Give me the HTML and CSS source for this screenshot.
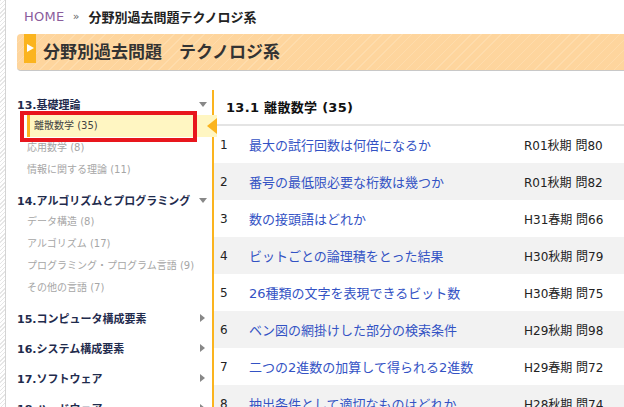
FILE: index.html
```
<!DOCTYPE html>
<html lang="ja">
<head>
    <meta charset="UTF-8">
    <title>分野別過去問題 テクノロジ系</title>
    <link rel="stylesheet" href="styles.css">
</head>
<body>
    <div class="page">
        <div class="breadcrumb">
            <a href="#" class="home">HOME</a>
            <span class="sep">»</span>
            <span class="current">分野別過去問題テクノロジ系</span>
        </div>
        <div class="title-band">
            <span class="marker"></span>
            <h1>分野別過去問題　テクノロジ系</h1>
        </div>
        <div class="columns">
            <div class="sidebar">
                <div class="cat">
                    <div class="cat-title">13.基礎理論<span class="arrow-down"></span></div>
                    <div class="sub active">離散数学 (35)<span class="pointer"></span><span class="mark"></span></div>
                    <div class="sub">応用数学 (8)</div>
                    <div class="sub">情報に関する理論 (11)</div>
                </div>
                <div class="cat">
                    <div class="cat-title">14.アルゴリズムとプログラミング<span class="arrow-down"></span></div>
                    <div class="sub">データ構造 (8)</div>
                    <div class="sub">アルゴリズム (17)</div>
                    <div class="sub">プログラミング・プログラム言語 (9)</div>
                    <div class="sub">その他の言語 (7)</div>
                </div>
                <div class="cat">
                    <div class="cat-title">15.コンピュータ構成要素<span class="arrow-right"></span></div>
                </div>
                <div class="cat">
                    <div class="cat-title">16.システム構成要素<span class="arrow-right"></span></div>
                </div>
                <div class="cat">
                    <div class="cat-title">17.ソフトウェア<span class="arrow-right"></span></div>
                </div>
                <div class="cat">
                    <div class="cat-title">18.ハードウェア<span class="arrow-right"></span></div>
                </div>
            </div>
            <div class="main">
                <h2>13.1 離散数学 (35)</h2>
                <ul class="qlist">
                    <li><span class="num">1</span><a href="#">最大の試行回数は何倍になるか</a><span class="exam">R01秋期 問80</span></li>
                    <li><span class="num">2</span><a href="#">番号の最低限必要な桁数は幾つか</a><span class="exam">R01秋期 問82</span></li>
                    <li><span class="num">3</span><a href="#">数の接頭語はどれか</a><span class="exam">H31春期 問66</span></li>
                    <li><span class="num">4</span><a href="#">ビットごとの論理積をとった結果</a><span class="exam">H30秋期 問79</span></li>
                    <li><span class="num">5</span><a href="#">26種類の文字を表現できるビット数</a><span class="exam">H30春期 問75</span></li>
                    <li><span class="num">6</span><a href="#">ベン図の網掛けした部分の検索条件</a><span class="exam">H29秋期 問98</span></li>
                    <li><span class="num">7</span><a href="#">二つの2進数の加算して得られる2進数</a><span class="exam">H29春期 問72</span></li>
                    <li><span class="num">8</span><a href="#">抽出条件として適切なものはどれか</a><span class="exam">H28秋期 問74</span></li>
                </ul>
            </div>
        </div>
    </div>
</body>
</html>
```
FILE: styles.css
```
body {
    margin: 0;
    font-family: 'DejaVu Sans', 'Noto Sans CJK JP', sans-serif;
    color: #222;
    background: #fff;
    overflow: hidden;
}
.page {
    height: 407px;
    padding-left: 17px;
    background:
        linear-gradient(#d4d4d4, #d4d4d4) 5px 0 / 1px 100% no-repeat,
        repeating-linear-gradient(135deg, #e6e6e6 0 1px, #fff 1px 3px) 0 0 / 5px 100% no-repeat;
}
.breadcrumb {
    height: 34px;
    display: flex;
    align-items: center;
    padding-left: 7px;
    font-size: 13px;
    padding-bottom: 2px;
    box-sizing: border-box;
}
.home {
    color: #8a5c9c;
    text-decoration: none;
    letter-spacing: 0.3px;
}
.sep {
    color: #666;
    font-size: 11px;
    margin: 0 9px 0 8px;
}
.current {
    font-weight: bold;
    color: #222;
}
.title-band {
    height: 36px;
    display: flex;
    align-items: flex-start;
    border-radius: 4px 0 0 4px;
    border-bottom: 1px solid #c8c8c8;
    background:
        repeating-linear-gradient(135deg, #fed59d 0 6px, #fedcac 6px 7px);
}
.marker {
    width: 12px;
    height: 29px;
    margin-left: 7px;
    background: #fbb41e;
    position: relative;
}
.marker::after {
    content: '';
    position: absolute;
    left: 3px;
    top: 10px;
    border-left: 7px solid #fff;
    border-top: 4px solid transparent;
    border-bottom: 4px solid transparent;
}
.title-band h1 {
    margin: 0 0 0 7px;
    line-height: 36px;
    font-size: 17px;
    color: #333;
}
.columns {
    display: flex;
    margin-top: 20px;
}
.sidebar {
    width: 195px;
    padding-top: 2px;
}
.cat {
    padding-bottom: 8px;
}
.cat-title {
    height: 22px;
    display: flex;
    align-items: center;
    justify-content: space-between;
    font-size: 11px;
    font-weight: bold;
    color: #1f2b4d;
    padding-right: 5px;
}
.arrow-down {
    border-top: 5px solid #888;
    border-left: 4px solid transparent;
    border-right: 4px solid transparent;
}
.arrow-right {
    border-left: 5px solid #888;
    border-top: 4px solid transparent;
    border-bottom: 4px solid transparent;
    margin-right: 2px;
}
.sub {
    height: 22px;
    line-height: 22px;
    margin-left: 10px;
    font-size: 10px;
    color: #a6a6a6;
}
.sub.active {
    position: relative;
    color: #444;
    background: #fff6c2;
    border-left: 3px solid #fbb41e;
    padding-left: 4px;
    margin-right: -5px;
}
.pointer {
    position: absolute;
    right: 0;
    top: 3px;
    border-right: 10px solid #fbb41e;
    border-top: 8px solid transparent;
    border-bottom: 8px solid transparent;
}
.mark {
    position: absolute;
    left: -10px;
    top: -4px;
    width: 169px;
    height: 23px;
    border: 4px solid #e8161d;
}
.main {
    flex: 1;
    border-left: 2px solid #fbb41e;
    margin-top: -1px;
}
.main h2 {
    margin: 0;
    height: 33px;
    padding-left: 12px;
    display: flex;
    align-items: center;
    font-size: 13px;
    color: #111;
    letter-spacing: 0.3px;
    border-bottom: 2px solid #e4e4e4;
    padding-bottom: 1px;
}
.qlist {
    list-style: none;
    margin: 0;
    padding: 0;
}
.qlist li {
    height: 37px;
    display: flex;
    align-items: center;
    font-size: 13px;
}
.qlist li:nth-child(even) {
    background: #f2f2f2;
}
.num {
    width: 29px;
    padding-left: 6px;
    font-size: 12px;
    color: #222;
}
.qlist a {
    flex: 1;
    color: #3352c4;
    text-decoration: none;
}
.exam {
    width: 100px;
    font-size: 12px;
    color: #222;
}
```
